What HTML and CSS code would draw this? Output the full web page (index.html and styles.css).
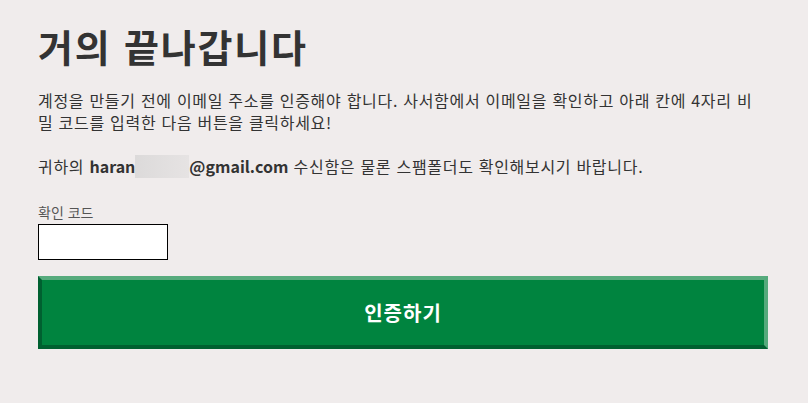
FILE: index.html
```
<!DOCTYPE html>
<html lang="ko">
<head>
<meta charset="utf-8">
<link rel="stylesheet" href="styles.css">
</head>
<body>
<main class="page">
  <h1 class="title">거의 끝나갑니다</h1>
  <p class="text">계정을 만들기 전에 이메일 주소를 인증해야 합니다. 사서함에서 이메일을 확인하고 아래 칸에 4자리 비밀 코드를 입력한 다음 버튼을 클릭하세요!</p>
  <p class="text email-line">귀하의 <strong>haran<span class="redact"></span>@gmail.com</strong> 수신함은 물론 스팸폴더도 확인해보시기 바랍니다.</p>
  <form class="form">
    <label class="label" for="code">확인 코드</label>
    <input class="input" id="code" type="text">
    <button class="button" type="button">인증하기</button>
  </form>
</main>
</body>
</html>
```
FILE: styles.css
```
html, body {
  margin: 0;
  padding: 0;
}
body {
  background: #f0ecec;
  font-family: "Noto Sans CJK KR", "Noto Sans", sans-serif;
  color: #333333;
}
.page {
  padding: 20px 0 0 38px;
  width: 730px;
}
.title {
  margin: 0;
  font-size: 38px;
  line-height: 52px;
  font-weight: 700;
  letter-spacing: 1.8px;
  color: #333333;
}
.text {
  margin: 17px 0 0;
  max-width: 718px;
  font-size: 16px;
  line-height: 22px;
  letter-spacing: 0.7px;
  word-break: break-all;
}
.email-line {
  margin-top: 22px;
  max-width: none;
}
.email-line strong {
  font-weight: 700;
  letter-spacing: 0;
}
.redact {
  display: inline-block;
  width: 54px;
  height: 23px;
  vertical-align: -5px;
  background: linear-gradient(90deg, #dcdada, #e6e3e3);
}
.form {
  display: flex;
  flex-direction: column;
  align-items: flex-start;
  margin-top: 25px;
}
.label {
  font-size: 14px;
  line-height: 18px;
  color: #555555;
}
.input {
  box-sizing: border-box;
  width: 130px;
  height: 36px;
  margin: 3px 0 0;
  border: 1px solid #000000;
  background: #ffffff;
  padding: 0 6px;
}
.button {
  box-sizing: border-box;
  width: 730px;
  height: 73px;
  margin-top: 16px;
  border-style: solid;
  border-width: 4px;
  border-color: #57ab7d #55aa7c #006030 #006030;
  background: #00843f;
  color: #ffffff;
  font-family: "Noto Sans CJK KR", "Noto Sans", sans-serif;
  font-size: 20px;
  font-weight: 700;
  letter-spacing: 1px;
  box-shadow: 0 4px 0 #c8c8c8;
  cursor: pointer;
}
```
